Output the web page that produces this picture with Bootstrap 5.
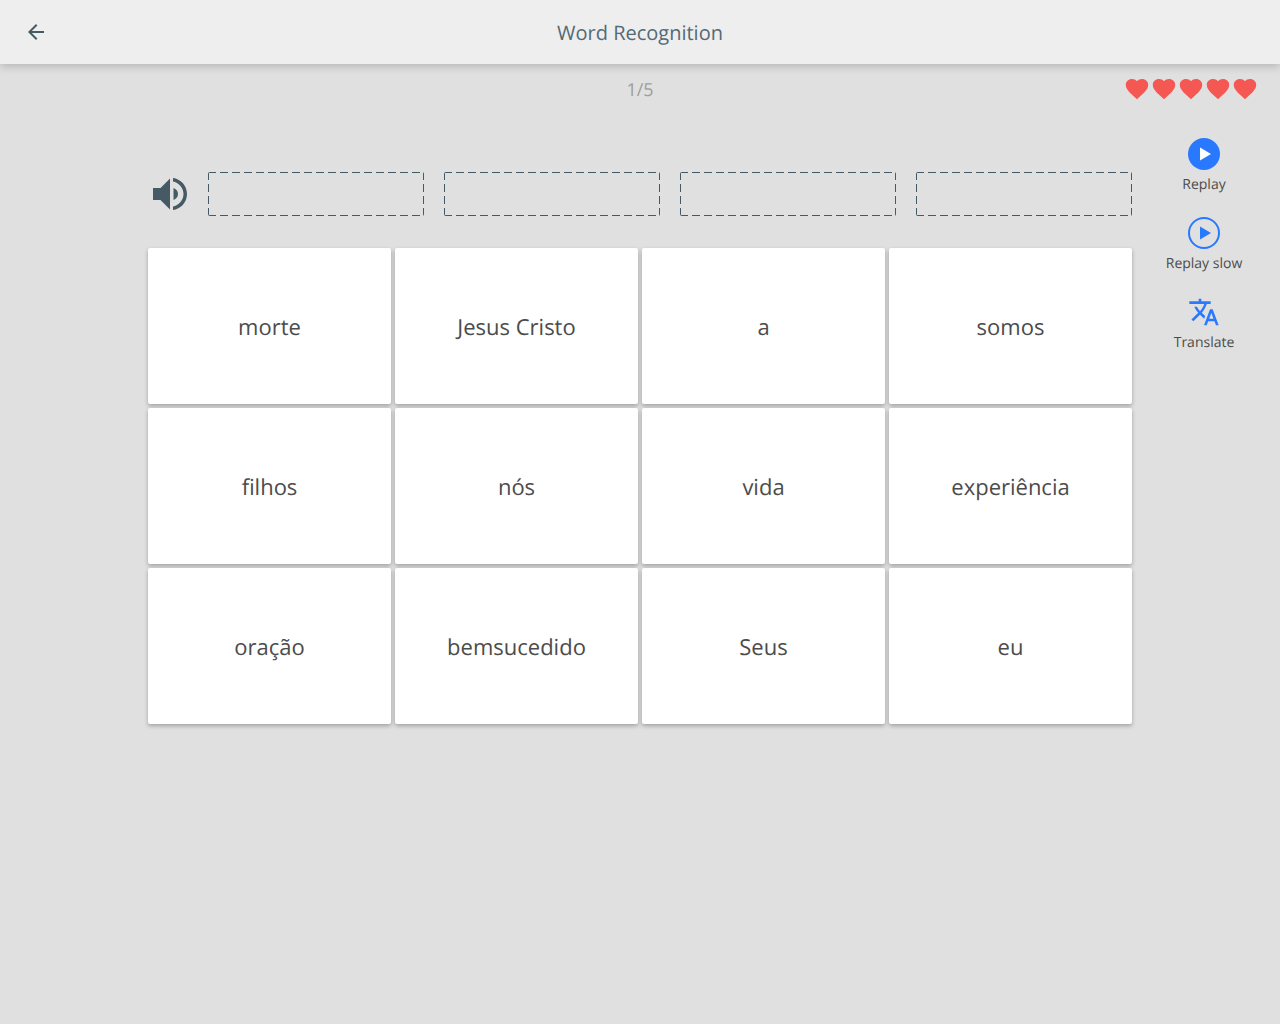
<!DOCTYPE html>
<html lang="en"><head><meta charset="utf-8"><title>Word Recognition</title>
<link href="https://cdn.jsdelivr.net/npm/bootstrap@5.3.0/dist/css/bootstrap.min.css" rel="stylesheet">
<style>
html,body{height:100%}
body{background:#e0e0e0;font-family:"Open Sans",sans-serif;color:#424242;min-height:1024px;text-rendering:geometricPrecision}
.topbar{height:64px;background:#eee;box-shadow:0 3px 8px rgba(0,0,0,.18);position:relative;padding-left:24px}
.backbtn{width:24px;height:24px;color:#455a64}
.ttl{font-size:20px;color:#546a74;line-height:28px;padding-right:48px;padding-top:2px}
.progline{height:50px;padding-right:23px;position:relative}
.progtxt{font-size:18px;color:#9e9e9e;position:absolute;left:0;right:0;top:13px;line-height:26px;text-align:center}
.hearts{gap:3px;padding-top:13px}
.hearts svg{width:24px;height:24px;display:block}
.stage{padding-left:148px}
.maincol{width:984px;padding-top:58px}
.soundic{width:36px;height:36px;margin:0 20px 0 4px;flex:none}
.slots{gap:20px;flex:1}
.slotbox{flex:1;height:44px;border-radius:2px;
background-image:repeating-linear-gradient(90deg,#455a64 0 8px,transparent 8px 12px),repeating-linear-gradient(90deg,#455a64 0 8px,transparent 8px 12px),repeating-linear-gradient(180deg,#455a64 0 8px,transparent 8px 12px),repeating-linear-gradient(180deg,#455a64 0 8px,transparent 8px 12px);
background-size:100% 1px,100% 1px,1px 100%,1px 100%;background-position:0 0,0 100%,0 0,100% 0;background-repeat:no-repeat}
.wordgrid{display:grid;grid-template-columns:repeat(4,243px);grid-auto-rows:156px;gap:4px;margin-top:32px}
.wordcard{background:#fff;border-radius:2px;box-shadow:0 2px 4px rgba(0,0,0,.28);font-size:22px;line-height:30px;color:#4c4c4c;padding-top:2px}
.sidecol{width:144px;padding-top:24px}
.sideitem{height:79px;font-size:14px;line-height:20px;color:#4c4c4c}
.sideitem svg{width:32px;height:32px;display:block;margin-bottom:5px}
</style></head>
<body>
<svg width="0" height="0" class="d-none"><symbol id="hrt" viewBox="0 0 24 24"><path fill="#f55753" transform="translate(0 .3) scale(1 .95)" d="M12 23.200 10.400 21.500C4.200 15.800.8 12.600.8 7.900.8 4.400 3.500 1.800 7 1.800c2 0 3.800.9 5 2.400 1.200-1.500 3-2.400 5-2.400 3.500 0 6.200 2.600 6.200 6.100 0 4.700-3.400 7.900-9.600 13.600z"/></symbol></svg>
<header class="topbar d-flex align-items-center">
<svg class="backbtn flex-none" viewBox="0 0 24 24"><path fill="currentColor" d="M20 11H7.830l5.590-5.590L12 4l-8 8 8 8 1.410-1.410L7.830 13H20v-2z"/></svg>
<div class="ttl flex-grow-1 text-center">Word Recognition</div>
</header>
<div class="progline d-flex justify-content-end">
<div class="progtxt">1/5</div>
<div class="hearts d-flex">
<svg viewBox="0 0 24 24"><use href="#hrt"/></svg>
<svg viewBox="0 0 24 24"><use href="#hrt"/></svg>
<svg viewBox="0 0 24 24"><use href="#hrt"/></svg>
<svg viewBox="0 0 24 24"><use href="#hrt"/></svg>
<svg viewBox="0 0 24 24"><use href="#hrt"/></svg>
</div>
</div>
<div class="stage d-flex align-items-start">
<main class="maincol">
<div class="d-flex align-items-center">
<svg class="soundic" viewBox="0 0 36 36"><path fill="#455a64" d="M1 12h7.500L18 2.500v31L8.500 24H1z"/><path fill="#455a64" d="M21.500 12c2.600.8 4.500 3.200 4.500 6s-1.900 5.200-4.500 6z"/><path fill="#455a64" d="M21 2c7.500.8 14 7.500 14 16s-6.500 15.200-14 16v-3.500c5.500-.8 10.500-6.300 10.500-12.500S26.500 6.300 21 5.500z"/></svg>
<div class="slots d-flex">
<div class="slotbox"></div><div class="slotbox"></div><div class="slotbox"></div><div class="slotbox"></div>
</div>
</div>
<div class="wordgrid">
<div class="wordcard d-flex align-items-center justify-content-center">morte</div>
<div class="wordcard d-flex align-items-center justify-content-center">Jesus Cristo</div>
<div class="wordcard d-flex align-items-center justify-content-center">a</div>
<div class="wordcard d-flex align-items-center justify-content-center">somos</div>
<div class="wordcard d-flex align-items-center justify-content-center">filhos</div>
<div class="wordcard d-flex align-items-center justify-content-center">nós</div>
<div class="wordcard d-flex align-items-center justify-content-center">vida</div>
<div class="wordcard d-flex align-items-center justify-content-center">experiência</div>
<div class="wordcard d-flex align-items-center justify-content-center">oração</div>
<div class="wordcard d-flex align-items-center justify-content-center">bemsucedido</div>
<div class="wordcard d-flex align-items-center justify-content-center">Seus</div>
<div class="wordcard d-flex align-items-center justify-content-center">eu</div>
</div>
</main>
<aside class="sidecol d-flex flex-column">
<div class="sideitem d-flex flex-column align-items-center">
<svg viewBox="0 0 32 32"><circle cx="16" cy="16" r="16" fill="#2979ff"/><path fill="#fff" d="M12 9.500v13l11-6.500z"/></svg>Replay</div>
<div class="sideitem d-flex flex-column align-items-center">
<svg viewBox="0 0 32 32"><circle cx="16" cy="16" r="15" fill="none" stroke="#2979ff" stroke-width="2"/><path fill="#2979ff" d="M12 9.500v13l11-6.500z"/></svg>Replay slow</div>
<div class="sideitem d-flex flex-column align-items-center">
<svg viewBox="0 0 24 24"><path fill="#2979ff" d="M12.870 15.070l-2.540-2.510.03-.03c1.740-1.940 2.980-4.170 3.710-6.530H17V4h-7V2H8v2H1v1.990h11.170C11.500 7.920 10.440 9.750 9 11.350 8.070 10.320 7.300 9.190 6.690 8h-2c.73 1.630 1.730 3.170 2.980 4.560l-5.090 5.020L4 19l5-5 3.110 3.110.76-2.040zM18.500 10h-2L12 22h2l1.120-3h4.750L21 22h2l-4.500-12zm-2.620 7l1.620-4.330L19.120 17h-3.240z"/></svg>Translate</div>
</aside>
</div>
<script src="https://cdn.jsdelivr.net/npm/bootstrap@5.3.0/dist/js/bootstrap.bundle.min.js"></script>
</body></html>
